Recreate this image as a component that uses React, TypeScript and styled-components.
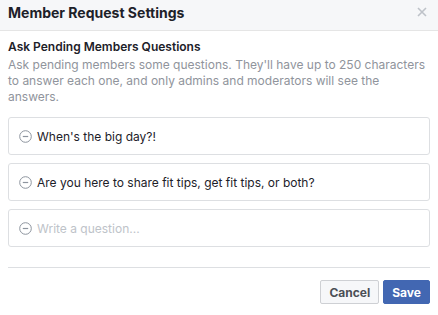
import * as React from 'react';
import styled, { createGlobalStyle } from 'styled-components';

const GlobalStyle = createGlobalStyle`
  html, body {
    margin: 0;
    padding: 0;
    background: #fff;
  }
  body {
    font-family: Inter, 'Liberation Sans', sans-serif;
    -webkit-font-smoothing: antialiased;
  }
`;

const questions = [
  "When's the big day?!",
  'Are you here to share fit tips, get fit tips, or both?',
];

const MinusIcon = () => (
  <svg width="13" height="13" viewBox="0 0 13 13">
    <circle cx="6.5" cy="6.5" r="5.8" fill="none" stroke="#8d949e" strokeWidth="1" />
    <line x1="3.8" y1="6.5" x2="9.2" y2="6.5" stroke="#8d949e" strokeWidth="1.2" />
  </svg>
);

const App = () => (
  <Dialog>
    <GlobalStyle />
    <Header>
      <Title>Member Request Settings</Title>
      <Close aria-label="Close">
        <svg width="10" height="10" viewBox="0 0 10 10">
          <path d="M1 1 L9 9 M9 1 L1 9" stroke="#bec2c9" strokeWidth="1.6" />
        </svg>
      </Close>
    </Header>
    <Body>
      <SectionTitle>Ask Pending Members Questions</SectionTitle>
      <Description>
        Ask pending members some questions. They'll have up to 250 characters
        to answer each one, and only admins and moderators will see the
        answers.
      </Description>
      <QuestionList>
        {questions.map((q) => (
          <QuestionBox key={q}>
            <MinusIcon />
            <QuestionText>{q}</QuestionText>
          </QuestionBox>
        ))}
        <QuestionBox>
          <MinusIcon />
          <QuestionText placeholder>Write a question...</QuestionText>
        </QuestionBox>
      </QuestionList>
    </Body>
    <Footer>
      <Button>Cancel</Button>
      <Button primary>Save</Button>
    </Footer>
  </Dialog>
);

const Dialog = styled.div`
  width: 438px;
  height: 315px;
  display: flex;
  flex-direction: column;
  background: #fff;
  color: #1d2129;
  overflow: hidden;
`;

const Header = styled.div`
  display: flex;
  align-items: center;
  justify-content: space-between;
  height: 31px;
  padding: 0 8px;
  background: #f6f7f9;
  border-bottom: 1px solid #e5e5e5;
  box-sizing: border-box;
`;

const Title = styled.div`
  font-size: 14px;
  font-weight: 700;
  color: #1d2129;
  margin-top: -6px;
`;

const Close = styled.div`
  display: flex;
  align-items: center;
  margin-top: -6px;
  margin-right: 3px;
`;

const Body = styled.div`
  padding: 8px 8px 0;
`;

const SectionTitle = styled.div`
  font-size: 12px;
  font-weight: 600;
  line-height: 16px;
  color: #1d2129;
`;

const Description = styled.div`
  margin-top: 2px;
  font-size: 12px;
  line-height: 16px;
  color: #90949c;
`;

const QuestionList = styled.div`
  display: flex;
  flex-direction: column;
  gap: 8px;
  margin-top: 12px;
  padding-bottom: 20px;
  border-bottom: 1px solid #dddfe2;
`;

const QuestionBox = styled.div`
  display: flex;
  align-items: center;
  gap: 5px;
  height: 38px;
  padding: 0 10px;
  border: 1px solid #dddfe2;
  border-radius: 3px;
  box-sizing: border-box;
`;

const QuestionText = styled.span<{ placeholder?: boolean }>`
  font-size: 12px;
  color: ${({ placeholder }) => (placeholder ? '#bec3c9' : '#1d2129')};
`;

const Footer = styled.div`
  display: flex;
  justify-content: flex-end;
  gap: 4px;
  padding: 12px 8px 0;
`;

const Button = styled.button<{ primary?: boolean }>`
  height: 24px;
  padding: 0 8px;
  font-family: inherit;
  font-size: 12px;
  font-weight: 700;
  border-radius: 2px;
  border: 1px solid ${({ primary }) => (primary ? '#4267b2' : '#ced0d4')};
  background: ${({ primary }) => (primary ? '#4267b2' : '#f6f7f9')};
  color: ${({ primary }) => (primary ? '#fff' : '#4b4f56')};
`;

export default App;
